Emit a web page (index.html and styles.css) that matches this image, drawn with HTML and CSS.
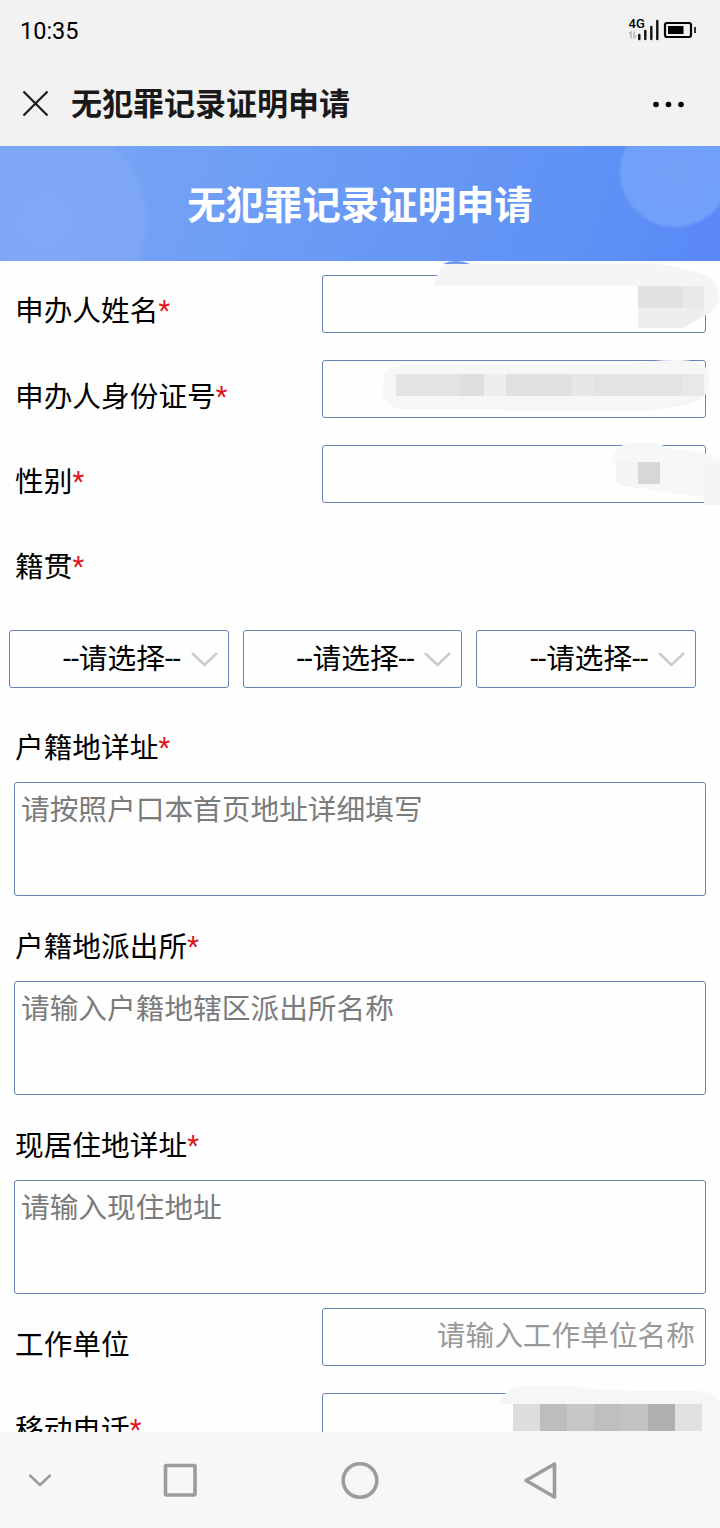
FILE: index.html
```html
<!DOCTYPE html>
<html lang="zh-CN">

<head>
  <meta charset="utf-8">
  <title>无犯罪记录证明申请</title>
  <link rel="stylesheet" href="styles.css">
</head>

<body>
  <div class="phone">
    <div class="status">
      <span class="time">10:35</span>
      <svg class="signal" width="70" height="26" viewBox="0 0 70 26">
        <text class="net" x="0.500" y="12">4G</text>
        <path d="M3 15.500v7M1 18L3 15.500M6 15.500v7M6 22.500l2.500-3" fill="none" stroke="#9a9a9a" stroke-width="1"/>
        <path d="M11.300 19v4M17.300 15v8M23.300 11v12M29.300 5v18" fill="none" stroke="#111" stroke-width="2.400" stroke-linecap="round"/>
        <rect x="37" y="7" width="26" height="14" rx="2" fill="none" stroke="#050505" stroke-width="2.200"/>
        <rect x="40" y="10" width="15.500" height="8" fill="#050505"/>
        <rect x="66" y="11" width="2" height="6" fill="#333"/>
      </svg>
    </div>
    <div class="navbar">
      <svg class="close" width="28" height="28" viewBox="0 0 28 28">
        <path d="M1.500 1.500L25.500 25.500M25.500 1.500L1.500 25.500" fill="none" stroke="#191919" stroke-width="2.200"/>
      </svg>
      <h1>无犯罪记录证明申请</h1>
      <svg class="more" width="34" height="8" viewBox="0 0 34 8">
        <circle cx="4" cy="4.500" r="2.800"/>
        <circle cx="16.500" cy="4.500" r="2.800"/>
        <circle cx="29" cy="4.500" r="2.800"/>
      </svg>
    </div>

    <div class="banner">
      <h2>无犯罪记录证明申请</h2>
    </div>

    <form class="form">
      <div class="row">
        <label>申办人姓名<i>*</i></label>
        <input type="text">
        <svg class="mask" width="720" height="85" viewBox="0 0 720 85">
          <path d="M443 3Q448 0 456 0T470 3Z" fill="#6d9aee"/>
          <path d="M434 25Q436 10 446 3H658Q690 8 706 14Q719 22 719 38Q715 51 704 55L683 67H638V25Z" fill="#f4f5f4"/>
          <rect x="638" y="25" width="44" height="22" fill="#e1e1e1"/>
          <rect x="682" y="25" width="22" height="22" fill="#e8e9e8"/>
          <path d="M638 47H704V55L683 67H638Z" fill="#eeeeee"/>
        </svg>
      </div>
      <div class="row">
        <label>申办人身份证号<i>*</i></label>
        <input type="text">
        <svg class="mask" width="720" height="85" viewBox="0 0 720 85">
          <path d="M384 28Q390 20 405 19H630Q650 14 676 14Q700 13 708 24Q712 34 708 44Q704 55 680 60L645 65H512L500 63H400Q388 60 382 50Z" fill="#f6f6f7"/>
          <rect x="396" y="28" width="88" height="22" fill="#e3e3e2"/>
          <rect x="461" y="28" width="23" height="22" fill="#dfdfdd"/>
          <rect x="484" y="28" width="22" height="22" fill="#eeeeee"/>
          <rect x="506" y="28" width="66" height="22" fill="#e1e1e2"/>
          <rect x="572" y="28" width="22" height="22" fill="#e7e6e8"/>
          <rect x="594" y="28" width="88" height="22" fill="#e3e3e5"/>
          <rect x="682" y="28" width="22" height="22" fill="#e8e8e8"/>
        </svg>
      </div>
      <div class="row">
        <label>性别<i>*</i></label>
        <input type="text">
        <svg class="mask" width="720" height="85" viewBox="0 0 720 85">
          <path d="M612 31Q614 16 628 12H656L672 18L704 22L720 28V74H704V66L660 60L640 57Q624 57 616 50V31Z" fill="#f6f7f8"/>
          <path d="M616 31H638V57Q624 57 616 50ZM704 32H720V74H704Z" fill="#f3f4f4"/>
          <rect x="638" y="31" width="22" height="22" fill="#d7d7d7"/>
        </svg>
      </div>
      <div class="row">
        <label>籍贯<i>*</i></label>
      </div>

      <div class="selects">
        <div class="select">
          <select><option>--请选择--</option></select>
          <svg width="28" height="18" viewBox="0 0 28 18"><path d="M1 3L13.500 15L26 3"/></svg>
        </div>
        <div class="select">
          <select><option>--请选择--</option></select>
          <svg width="28" height="18" viewBox="0 0 28 18"><path d="M1 3L13.500 15L26 3"/></svg>
        </div>
        <div class="select">
          <select><option>--请选择--</option></select>
          <svg width="28" height="18" viewBox="0 0 28 18"><path d="M1 3L13.500 15L26 3"/></svg>
        </div>
      </div>

      <div class="block">
        <label>户籍地详址<i>*</i></label>
        <textarea placeholder="请按照户口本首页地址详细填写"></textarea>
      </div>
      <div class="block">
        <label>户籍地派出所<i>*</i></label>
        <textarea placeholder="请输入户籍地辖区派出所名称"></textarea>
      </div>
      <div class="block">
        <label>现居住地详址<i>*</i></label>
        <textarea placeholder="请输入现住地址"></textarea>
      </div>

      <div class="row">
        <label>工作单位</label>
        <input type="text" placeholder="请输入工作单位名称">
      </div>
      <div class="row">
        <label>移动电话<i>*</i></label>
        <input type="text">
        <svg class="mask" width="720" height="85" viewBox="0 0 720 85">
          <path d="M499 25Q504 9 525 7H570L600 11L650 12H700Q715 14 720 22V53H513V25Z" fill="#f5f6f6"/>
          <rect x="513" y="25" width="27" height="27" fill="#dddddd"/>
          <rect x="540" y="25" width="27" height="27" fill="#bdbdbd"/>
          <rect x="567" y="25" width="27" height="27" fill="#c7c7c7"/>
          <rect x="594" y="25" width="27" height="27" fill="#bfbfbf"/>
          <rect x="621" y="25" width="27" height="27" fill="#c3c3c3"/>
          <rect x="648" y="25" width="27" height="27" fill="#afafaf"/>
          <rect x="675" y="25" width="27" height="27" fill="#e0e0e0"/>
        </svg>
      </div>
    </form>

    <div class="keys">
      <svg width="720" height="96" viewBox="0 0 720 96">
        <path d="M29.500 43L40 53L50.500 43" stroke-width="2.600"/>
        <rect x="165.500" y="33.500" width="29.500" height="29.500" rx="1"/>
        <circle cx="360" cy="48.500" r="16.800"/>
        <path d="M554.500 32L526 48.500L554.500 65Z"/>
      </svg>
    </div>
  </div>
</body>

</html>
```

FILE: styles.css
```css
* {
  margin: 0;
  padding: 0;
  box-sizing: border-box;
}

body,
input,
textarea,
select {
  font-family: Roboto, "Noto Sans CJK SC", sans-serif;
  font-size: 28.7px;
  color: #000;
}

.phone {
  width: 720px;
  height: 1528px;
  display: flex;
  flex-direction: column;
  overflow: hidden;
  background: #fefefe;
}

.status {
  height: 62px;
  padding: 0 22px 0 20px;
  display: flex;
  justify-content: space-between;
  align-items: center;
  background: #f2f2f2;
}

.time {
  font-size: 23.5px;
}

.signal {
  margin-top: -4px;
}

.net {
  font: 500 13px Roboto, sans-serif;
}

.navbar {
  height: 84px;
  padding: 0 34px 0 22px;
  display: flex;
  align-items: center;
  background: #f2f2f2;
}

.navbar h1 {
  margin-left: 21px;
  padding-bottom: 5px;
  flex: 1;
  font-size: 31px;
  font-weight: 700;
  color: #191919;
}

.banner {
  height: 115px;
  padding-bottom: 4px;
  display: flex;
  justify-content: center;
  align-items: center;
  background:
    radial-gradient(circle at 675px 26px, #75a0f8 0, #71a0f8 53px, transparent 57px),
    radial-gradient(circle at 45px 75px, #82a8f8 0, #7da6f7 98px, transparent 104px),
    linear-gradient(110deg, #7aa7f5, #6697f4 58%, #5d90f6 85%, #5987f7);
}

.banner h2 {
  font-size: 38.4px;
  font-weight: 700;
  color: #fff;
}

.form {
  flex: 1;
  min-height: 0;
  overflow: hidden;
}

.row {
  position: relative;
  height: 85px;
  padding: 14px 14px 0 15px;
  display: flex;
  justify-content: space-between;
}

.row label {
  line-height: 74px;
  height: 74px;
}

.row:first-child label {
  line-height: 72px;
}

label i {
  font-size: 27px;
  line-height: 1;
  font-style: normal;
  vertical-align: 1.5px;
  color: #e0141e;
}

input,
textarea,
select {
  border: 1px solid #6485b5;
  border-radius: 3px;
  background: #fefefe;
  outline: none;
}

.row input {
  width: 384px;
  height: 58px;
  padding: 0 10px 2px;
  text-align: right;
}

.row input::placeholder {
  color: #999;
}

/* smudge over the filled-in value */
.mask {
  position: absolute;
  top: 0;
  left: 0;
  overflow: visible;
}

.selects {
  margin-top: 29px;
  padding: 0 24px 0 9px;
  display: grid;
  grid-template-columns: repeat(3, 1fr);
  gap: 14px;
}

.select {
  display: grid;
  align-items: center;
}

.select select {
  grid-area: 1 / 1;
  width: 100%;
  height: 58px;
  padding: 0 0 1px 53px;
  appearance: none;
}

.select svg {
  grid-area: 1 / 1;
  justify-self: end;
  margin-right: 10px;
  pointer-events: none;
}

.select path {
  fill: none;
  stroke: #ccc;
  stroke-width: 2.6;
}

.block {
  padding: 0 14px;
  margin-bottom: 15px;
}

.selects + .block {
  margin-top: 24px;
}

.block:nth-last-child(3) {
  margin-bottom: 0;
}

.block label {
  display: block;
  height: 70px;
  padding-left: 1px;
  line-height: 72px;
}

.block textarea {
  display: block;
  width: 100%;
  height: 114px;
  padding: 4px 6px;
  resize: none;
}

.block textarea::placeholder {
  color: #7b7b7b;
}

.keys {
  height: 96px;
  background: #f7f7f7;
}

.keys svg {
  display: block;
  fill: none;
  stroke: #9c9c9c;
  stroke-width: 3.6;
  stroke-linejoin: round;
}
```
